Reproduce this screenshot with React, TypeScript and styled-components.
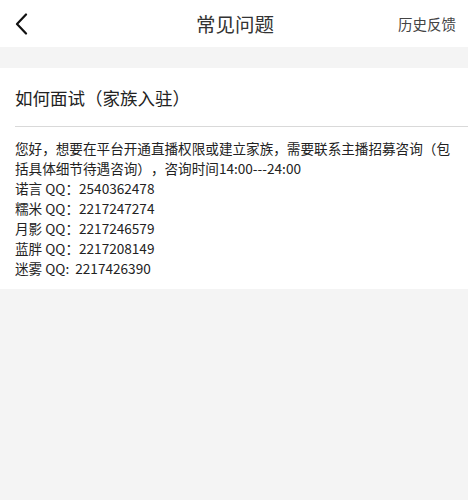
import React from "react";
import styled, { createGlobalStyle } from "styled-components";

const Global = createGlobalStyle`
  html, body { margin: 0; padding: 0; background: #f4f4f4; }
  body {
    font-family: "Noto Sans CJK SC", "Noto Sans", sans-serif;
    text-spacing-trim: space-all;
  }
`;

const Page = styled.div`
  width: 468px;
  min-height: 500px;
  background: #f4f4f4;
`;

const Header = styled.header`
  height: 47px;
  background: #fff;
  display: grid;
  grid-template-columns: 1fr auto 1fr;
  align-items: center;
  padding: 0 12px 0 14px;
`;

const BackButton = styled.div`
  display: flex;
  align-items: center;
  color: #111;
`;

const Title = styled.h1`
  margin: 0;
  font-size: 19.5px;
  font-weight: 400;
  color: #333;
  letter-spacing: 0;
`;

const HeaderAction = styled.div`
  justify-self: end;
  font-size: 14.5px;
  color: #444;
`;

const Card = styled.section`
  margin-top: 21px;
  background: #fff;
  padding-left: 15px;
`;

const QuestionTitle = styled.h2`
  margin: 0;
  height: 58px;
  display: flex;
  align-items: center;
  font-size: 17.5px;
  font-weight: 400;
  color: #222;
  border-bottom: 1.5px solid #d9d9d9;
`;

const Answer = styled.div`
  padding: 11px 15px 11px 0;
  font-size: 13.6px;
  line-height: 20px;
  color: #222;
`;

const Line = styled.div``;

const contacts = [
  ["诺言", "QQ：", "2540362478"],
  ["糯米", "QQ：", "2217247274"],
  ["月影", "QQ：", "2217246579"],
  ["蓝胖", "QQ：", "2217208149"],
  ["迷雾", "QQ:\u00a0\u00a0", "2217426390"],
];

export default function App() {
  return (
    <Page>
      <Global />
      <Header>
        <BackButton>
          <svg width="14" height="22" viewBox="0 0 14 22" fill="none">
            <path d="M12 1.5 L3 11 L12 20.5" stroke="#111" strokeWidth="2.2" strokeLinecap="round" strokeLinejoin="round" />
          </svg>
        </BackButton>
        <Title>常见问题</Title>
        <HeaderAction>历史反馈</HeaderAction>
      </Header>
      <Card>
        <QuestionTitle>如何面试（家族入驻）</QuestionTitle>
        <Answer>
          <Line>
            您好，想要在平台开通直播权限或建立家族，需要联系主播招募咨询（包括具体细节待遇咨询），咨询时间14:00---24:00
          </Line>
          {contacts.map(([name, qq, num]) => (
            <Line key={num}>
              {name} {qq}{num}
            </Line>
          ))}
        </Answer>
      </Card>
    </Page>
  );
}
